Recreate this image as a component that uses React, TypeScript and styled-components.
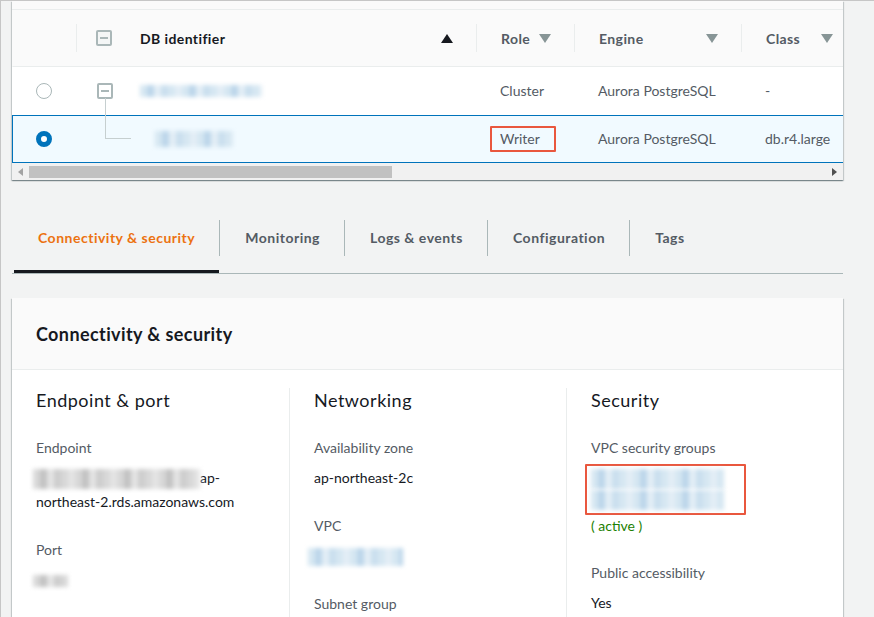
import styled, { createGlobalStyle, css } from "styled-components"

const GlobalStyle = createGlobalStyle`
  html, body {
    margin: 0;
    padding: 0;
  }
  body {
    background: #f2f3f3;
    font-family: Lato, "Open Sans", sans-serif;
    font-size: 14px;
    color: #16191f;
  }
`

type Tone = "blue" | "gray"

const tones = {
  blue: ["#d6e7f2", "#bcd6ea", "#cadfee", "#e3eef6"],
  gray: ["#d8d8d8", "#c2c2c2", "#cdcdcd", "#e4e4e4"],
}

const columns = [
  { key: "id", label: "DB identifier", sorted: true },
  { key: "role", label: "Role" },
  { key: "engine", label: "Engine" },
  { key: "class", label: "Class" },
]

export default function App() {
  return (
    <>
      <GlobalStyle />
      <Page>
        <Card>
          <TopStrip />
          <TableRow $header>
            <Cell />
            {columns.map((col, i) => (
              <HeaderCell key={col.key} $first={i === 0}>
                <HeaderLabel $sorted={col.sorted}>
                  {i === 0 && <TreeBox $header />}
                  {col.label}
                </HeaderLabel>
                <SortCaret up={col.sorted} />
              </HeaderCell>
            ))}
          </TableRow>

          <TableRow>
            <Cell>
              <Radio />
            </Cell>
            <IdCell>
              <TreeBox />
              <Mosaic $width={122} $height={12} $tone="blue" />
            </IdCell>
            <Cell>Cluster</Cell>
            <Cell>Aurora PostgreSQL</Cell>
            <Cell>-</Cell>
          </TableRow>

          <TableRow $selected>
            <Cell>
              <Radio $checked />
            </Cell>
            <IdCell $child>
              <TreeLine />
              <Mosaic $width={78} $height={16} $tone="blue" />
            </IdCell>
            <Cell>
              <Highlight $inline>Writer</Highlight>
            </Cell>
            <Cell>Aurora PostgreSQL</Cell>
            <Cell>db.r4.large</Cell>
          </TableRow>

          <Scrollbar>
            <ScrollArrow>
              <svg width="5" height="8" viewBox="0 0 5 8">
                <path d="M5 0 L0 4 L5 8 Z" fill="#a3a3a3" />
              </svg>
            </ScrollArrow>
            <ScrollTrack>
              <ScrollThumb />
            </ScrollTrack>
            <ScrollArrow>
              <svg width="5" height="8" viewBox="0 0 5 8">
                <path d="M0 0 L5 4 L0 8 Z" fill="#505050" />
              </svg>
            </ScrollArrow>
          </Scrollbar>
        </Card>

        <TabBar>
          <Tab $active>
            <TabLabel $first>Connectivity &amp; security</TabLabel>
          </Tab>
          <Tab>
            <TabLabel>Monitoring</TabLabel>
          </Tab>
          <Tab>
            <TabLabel>Logs &amp; events</TabLabel>
          </Tab>
          <Tab>
            <TabLabel>Configuration</TabLabel>
          </Tab>
          <Tab>
            <TabLabel>Tags</TabLabel>
          </Tab>
        </TabBar>

        <Panel>
          <PanelHeader>Connectivity &amp; security</PanelHeader>
          <PanelBody>
            <Column>
              <ColumnTitle>Endpoint &amp; port</ColumnTitle>
              <Field>
                <FieldLabel>Endpoint</FieldLabel>
                <FieldValue>
                  <Mosaic $width={167} $height={20} $tone="gray" $offset={-3} />
                  ap-northeast-2.rds.amazonaws.com
                </FieldValue>
              </Field>
              <Field>
                <FieldLabel>Port</FieldLabel>
                <FieldValue>
                  <Mosaic $width={35} $height={12} $tone="gray" $offset={-3} />
                </FieldValue>
              </Field>
            </Column>

            <Column $divider>
              <ColumnTitle>Networking</ColumnTitle>
              <Field>
                <FieldLabel>Availability zone</FieldLabel>
                <FieldValue>ap-northeast-2c</FieldValue>
              </Field>
              <Field>
                <FieldLabel>VPC</FieldLabel>
                <FieldValue>
                  <Mosaic $width={95} $height={18} $tone="blue" $offset={-6} />
                </FieldValue>
              </Field>
              <Field>
                <FieldLabel>Subnet group</FieldLabel>
              </Field>
            </Column>

            <Column $divider>
              <ColumnTitle>Security</ColumnTitle>
              <Field>
                <FieldLabel>VPC security groups</FieldLabel>
                <Highlight>
                  <Mosaic $width={133} $height={20} $tone="blue" />
                  <Mosaic $width={133} $height={20} $tone="blue" />
                </Highlight>
                <Status>( active )</Status>
              </Field>
              <Field>
                <FieldLabel>Public accessibility</FieldLabel>
                <FieldValue>Yes</FieldValue>
              </Field>
            </Column>
          </PanelBody>
        </Panel>
      </Page>
    </>
  )
}

function SortCaret({ up }: { up?: boolean }) {
  return (
    <svg width="12" height="9" viewBox="0 0 12 9">
      {up ? (
        <path d="M6 0 L12 9 L0 9 Z" fill="#16191f" />
      ) : (
        <path d="M0 0 L12 0 L6 9 Z" fill="#879596" />
      )}
    </svg>
  )
}

const Page = styled.div`
  box-sizing: border-box;
  width: 874px;
  height: 617px;
  overflow: hidden;
  border-top: 1px solid #c6c6c6;
  border-left: 1px solid #c6c6c6;
  padding: 0 31px 0 11px;
`

const cardShadow = css`
  box-shadow: 0 1px 1px 0 rgba(0, 28, 36, 0.3), 1px 1px 1px 0 rgba(0, 28, 36, 0.15),
    -1px 1px 1px 0 rgba(0, 28, 36, 0.15);
`

const Card = styled.div`
  background: #fff;
  overflow: hidden;
  ${cardShadow}
`

const TopStrip = styled.div`
  height: 8px;
  background: #fafafa;
  border-bottom: 1px solid #eaeded;
`

type TableRowProps = {
  $header?: boolean,
  $selected?: boolean
}

const TableRow = styled.div<TableRowProps>`
  box-sizing: border-box;
  display: grid;
  grid-template-columns: 63px 400px 98px 167px 115px;
  width: 844px;
  align-items: center;
  border: 1px solid transparent;
  ${({ $header }) =>
    $header
      ? css`
          height: 57px;
          border-top: none;
          background: #fafafa;
          border-bottom-color: #eaeded;
        `
      : css`
          height: 48px;
        `}
  ${({ $selected }) =>
    $selected &&
    css`
      background: #f1faff;
      border-color: #0073bb;
    `}
`

const Cell = styled.div`
  box-sizing: border-box;
  display: flex;
  align-items: center;
  padding-left: 24px;
  color: #545b64;
  line-height: 20px;
  white-space: nowrap;

  &:first-child {
    padding-left: 23px;
  }
`

const IdCell = styled.div<{ $child?: boolean }>`
  position: relative;
  align-self: stretch;
  display: flex;
  align-items: center;
  gap: 27px;
  padding-left: ${({ $child }) => ($child ? "79px" : "21px")};
`

const HeaderCell = styled.div<{ $first?: boolean }>`
  box-sizing: border-box;
  height: 28px;
  display: flex;
  align-items: center;
  justify-content: space-between;
  border-left: 1px solid #eaeded;
  padding: 0 23px 0 ${({ $first }) => ($first ? "19px" : "24px")};
`

const HeaderLabel = styled.div<{ $sorted?: boolean }>`
  display: flex;
  align-items: center;
  gap: 28px;
  font-weight: 700;
  letter-spacing: 0.4px;
  color: ${({ $sorted }) => ($sorted ? "#16191f" : "#545b64")};
`

const TreeBox = styled.span<{ $header?: boolean }>`
  box-sizing: border-box;
  width: 16px;
  height: 16px;
  border: 2px solid #aab7b8;
  border-radius: 2px;
  background: ${({ $header }) => ($header ? "#f4f6f6" : "#fff")};
  display: flex;
  align-items: center;
  justify-content: center;

  &::after {
    content: "";
    width: 8px;
    height: 2px;
    background: #aab7b8;
  }
`

/* connecteur de l'arbre : part du carré de la ligne parente */
const TreeLine = styled.span`
  position: absolute;
  left: 29px;
  top: -18px;
  width: 25px;
  height: 40px;
  border-left: 1px solid #c6cfd0;
  border-bottom: 1px solid #c6cfd0;
`

const Radio = styled.span<{ $checked?: boolean }>`
  box-sizing: border-box;
  width: 16px;
  height: 16px;
  border-radius: 50%;
  background: #fff;
  border: ${({ $checked }) => ($checked ? "5px solid #0073bb" : "1.5px solid #aab7b8")};
`

type MosaicProps = {
  $width: number,
  $height: number,
  $tone: Tone,
  $offset?: number
}

const Mosaic = styled.span<MosaicProps>`
  display: inline-block;
  vertical-align: middle;
  width: ${({ $width }) => $width}px;
  height: ${({ $height }) => $height}px;
  margin-left: ${({ $offset }) => $offset ?? 0}px;
  background: ${({ $tone }) => {
    const [a, b, c, d] = tones[$tone]
    return `repeating-linear-gradient(90deg, ${a} 0 7px, ${b} 7px 14px, ${d} 14px 21px, ${c} 21px 28px, ${a} 28px 35px, ${d} 35px 42px)`
  }};
  filter: blur(2px);
`

const Highlight = styled.div<{ $inline?: boolean }>`
  box-sizing: border-box;
  border: 2px solid #e9573e;
  border-radius: 1px;
  ${({ $inline }) =>
    $inline
      ? css`
          display: inline-block;
          line-height: 20px;
          padding: 1px 14px 1px 8px;
          margin-left: -10px;
          color: #545b64;
        `
      : css`
          display: flex;
          flex-direction: column;
          gap: 1px;
          width: 161px;
          padding: 3px 20px 3px 4px;
          margin: 6px 0 0 -6px;
        `}
`

const Scrollbar = styled.div`
  display: flex;
  height: 17px;
  background: #f1f1f1;
`

const ScrollArrow = styled.div`
  width: 17px;
  display: flex;
  align-items: center;
  justify-content: center;
`

const ScrollTrack = styled.div`
  flex: 1;
  display: flex;
  align-items: center;
`

const ScrollThumb = styled.div`
  width: 363px;
  height: 12px;
  background: #c1c1c1;
`

const TabBar = styled.div`
  display: flex;
  margin-top: 24px;
  padding-left: 2px;
  border-bottom: 1px solid #aab7b8;
`

const Tab = styled.div<{ $active?: boolean }>`
  box-sizing: border-box;
  height: 69px;
  padding-top: 2px;
  display: flex;
  align-items: center;
  border-bottom: 3px solid ${({ $active }) => ($active ? "#16191f" : "transparent")};
  font-weight: 700;
  letter-spacing: 0.5px;
  color: ${({ $active }) => ($active ? "#ec7211" : "#545b64")};
`

const TabLabel = styled.div<{ $first?: boolean }>`
  line-height: 20px;
  padding: 8px 24px 8px ${({ $first }) => ($first ? "24px" : "25px")};
  border-left: ${({ $first }) => ($first ? "none" : "1px solid #aab7b8")};
`

const Panel = styled.div`
  margin-top: 24px;
  background: #fff;
  ${cardShadow}
`

const PanelHeader = styled.div`
  height: 71px;
  display: flex;
  align-items: center;
  padding: 0 24px;
  background: #fafafa;
  border-bottom: 1px solid #eaeded;
  font-size: 18px;
  font-weight: 700;
  letter-spacing: 0.4px;
`

const PanelBody = styled.div`
  display: grid;
  grid-template-columns: repeat(3, 1fr);
  padding-top: 18px;
  height: 260px;
`

const Column = styled.div<{ $divider?: boolean }>`
  padding: 0 24px;
  border-left: ${({ $divider }) => ($divider ? "1px solid #eaeded" : "none")};
`

const ColumnTitle = styled.div`
  font-size: 18px;
  line-height: 24px;
  letter-spacing: 0.5px;
`

const Field = styled.div`
  margin-top: 26px;
`

const FieldLabel = styled.div`
  line-height: 20px;
  color: #545b64;
`

const FieldValue = styled.div`
  margin-top: 8px;
  line-height: 24px;
`

const Status = styled.div`
  line-height: 22px;
  color: #1d8102;
`
